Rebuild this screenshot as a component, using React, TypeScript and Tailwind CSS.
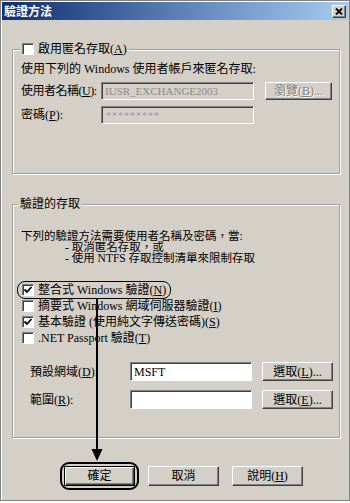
const RAISED =
  "border border-t-white border-l-white border-r-[#404040] border-b-[#404040] shadow-[inset_-1px_-1px_0_#808080]";
const SUNKEN =
  "border border-t-[#808080] border-l-[#808080] border-r-white border-b-white shadow-[inset_1px_1px_0_#404040]";
const GROUP =
  "border border-[#a0a0a0] shadow-[1px_1px_0_white,inset_1px_1px_0_white]";

function Mn({ k }: { k: string }) {
  return (
    <>
      (<u>{k}</u>)
    </>
  );
}

function Checkbox({ checked }: { checked?: boolean }) {
  return (
    <span className={"w-[12px] h-[12px] shrink-0 bg-white flex items-center justify-center " + SUNKEN}>
      {checked && (
        <svg width="10" height="10" viewBox="0 0 10 10">
          <polyline points="1.5,4.5 4,7 8.5,2" fill="none" stroke="black" strokeWidth="1.8" />
        </svg>
      )}
    </span>
  );
}

function Btn({
  children,
  className = "",
  disabled,
}: {
  children: React.ReactNode;
  className?: string;
  disabled?: boolean;
}) {
  return (
    <div
      className={
        "flex items-center justify-center bg-[#d4d0c8] leading-none whitespace-nowrap " +
        RAISED +
        (disabled ? " text-[#808080] [text-shadow:1px_1px_0_white] " : " ") +
        className
      }
    >
      {children}
    </div>
  );
}

export default function App() {
  return (
    <div className="w-[350px] h-[503px] bg-white relative font-['Liberation_Serif','Noto_Sans_CJK_TC',serif] text-[12px] text-black">
      <div className="h-[501px] bg-[#d4d0c8] border border-[#808080] shadow-[inset_1px_1px_0_white] flex flex-col">
        {/* 標題列 */}
        <div className="h-[18px] mx-[1px] mt-[1px] bg-linear-to-r from-[#122d6c] via-[#5a7fb6] to-[#a9cbef] flex items-center justify-between pl-[2px] pr-[2px]">
          <span className="text-white font-bold text-[12px] leading-none font-['Noto_Sans_CJK_TC',sans-serif]">驗證方法</span>
          <span className={"w-[14px] h-[13px] bg-[#d4d0c8] flex items-center justify-center " + RAISED}>
            <svg width="8" height="7" viewBox="0 0 8 7">
              <path d="M1 0.5 L7 6.5 M7 0.5 L1 6.5" stroke="black" strokeWidth="1.8" />
            </svg>
          </span>
        </div>

        <div className="pl-[11px]">
          {/* 匿名存取 */}
          <fieldset className={"mt-[22px] w-[328px] h-[132px] " + GROUP}>
            <legend className="ml-[7px] px-[2px] h-[14px] flex items-center gap-[4px] bg-[#d4d0c8] leading-[14px]">
              <Checkbox />
              <span>
                啟用匿名存取<Mn k="A" />
              </span>
            </legend>
            <div className="pl-[8px]">
              <div className="mt-[6px] h-[14px] leading-[14px] whitespace-nowrap">使用下列的 Windows 使用者帳戶來匿名存取:</div>
              <div className="mt-[6px] h-[18px] flex items-center">
                <span className="w-[80px] shrink-0 whitespace-nowrap tracking-[-0.5px]">
                  使用者名稱<Mn k="U" />:
                </span>
                <div className={"w-[153px] h-[18px] flex items-center pl-[3px] text-[#8a8a8a] text-[11px] " + SUNKEN}>
                  IUSR_EXCHANGE2003
                </div>
                <Btn disabled className="ml-[11px] w-[67px] h-[18px]">
                  瀏覽<Mn k="B" />...
                </Btn>
              </div>
              <div className="mt-[6px] h-[18px] flex items-center">
                <span className="w-[80px] shrink-0 whitespace-nowrap">
                  密碼<Mn k="P" />:
                </span>
                <div className={"w-[153px] h-[18px] flex items-center pl-[4px] text-[#9a9a9a] text-[10px] tracking-[1px] " + SUNKEN}>
                  *********
                </div>
              </div>
            </div>
          </fieldset>

          {/* 驗證的存取 */}
          <fieldset className={"mt-[23px] w-[328px] h-[241px] " + GROUP}>
            <legend className="ml-[5px] px-[2px] h-[14px] leading-[14px] bg-[#d4d0c8]">驗證的存取</legend>
            <div className="pl-[8px]">
              <div className="mt-[20px] leading-[11px] text-[11.5px] whitespace-nowrap">
                <div>下列的驗證方法需要使用者名稱及密碼，當:</div>
                <div className="pl-[44px]">- 取消匿名存取，或</div>
                <div className="pl-[44px]">- 使用 NTFS 存取控制清單來限制存取</div>
              </div>

              <div className="mt-[18px] pl-[1px] whitespace-nowrap">
                <div className="h-[16px] flex items-center">
                  <span className="-ml-[3px] pl-[3px] pr-[3px] h-[14px] flex items-center gap-[4px] rounded-[6px] outline-[1.5px] outline-solid outline-black outline-offset-[1px]">
                    <Checkbox checked />
                    <span>
                      整合式 Windows 驗證<Mn k="N" />
                    </span>
                  </span>
                </div>
                <div className="h-[16px] flex items-center gap-[4px]">
                  <Checkbox />
                  <span>
                    摘要式 Windows 網域伺服器驗證<Mn k="I" />
                  </span>
                </div>
                <div className="h-[16px] flex items-center gap-[4px]">
                  <Checkbox checked />
                  <span>
                    基本驗證 (使用純文字傳送密碼)<Mn k="S" />
                  </span>
                </div>
                <div className="h-[16px] flex items-center gap-[4px]">
                  <Checkbox />
                  <span>
                    .NET Passport 驗證<Mn k="T" />
                  </span>
                </div>
              </div>

              <div className="mt-[16px] h-[19px] flex items-center">
                <span className="w-[109px] shrink-0 pl-[9px] whitespace-nowrap">
                  預設網域<Mn k="D" />:
                </span>
                <div className={"w-[122px] h-[19px] flex items-center pl-[3px] bg-white " + SUNKEN}>MSFT</div>
                <Btn className="ml-[10px] w-[71px] h-[19px]">
                  選取<Mn k="L" />...
                </Btn>
              </div>
              <div className="mt-[9px] h-[19px] flex items-center">
                <span className="w-[109px] shrink-0 pl-[9px] whitespace-nowrap">
                  範圍<Mn k="R" />:
                </span>
                <div className={"w-[122px] h-[19px] bg-white " + SUNKEN} />
                <Btn className="ml-[10px] w-[71px] h-[19px]">
                  選取<Mn k="E" />...
                </Btn>
              </div>
            </div>
          </fieldset>

          {/* 按鈕列 */}
          <div className="mt-[28px] pl-[52px] flex gap-[13px]">
            <div className="rounded-[5px] outline-2 outline-solid outline-black outline-offset-[2px]">
              <div className="w-[71px] h-[20px] flex items-center justify-center bg-[#d4d0c8] border border-black shadow-[inset_1px_1px_0_white,inset_-1px_-1px_0_#404040,inset_-2px_-2px_0_#808080]">
                確定
              </div>
            </div>
            <Btn className="w-[71px] h-[20px]">取消</Btn>
            <Btn className="w-[71px] h-[20px]">
              說明<Mn k="H" />
            </Btn>
          </div>
        </div>
      </div>

      {/* 標註箭頭 */}
      <svg className="absolute inset-0 pointer-events-none" width="350" height="503">
        <line x1="97" y1="299" x2="97" y2="452" stroke="black" strokeWidth="2" />
        <polygon points="91.5,449 102.5,449 97,461" fill="black" />
      </svg>
    </div>
  );
}
